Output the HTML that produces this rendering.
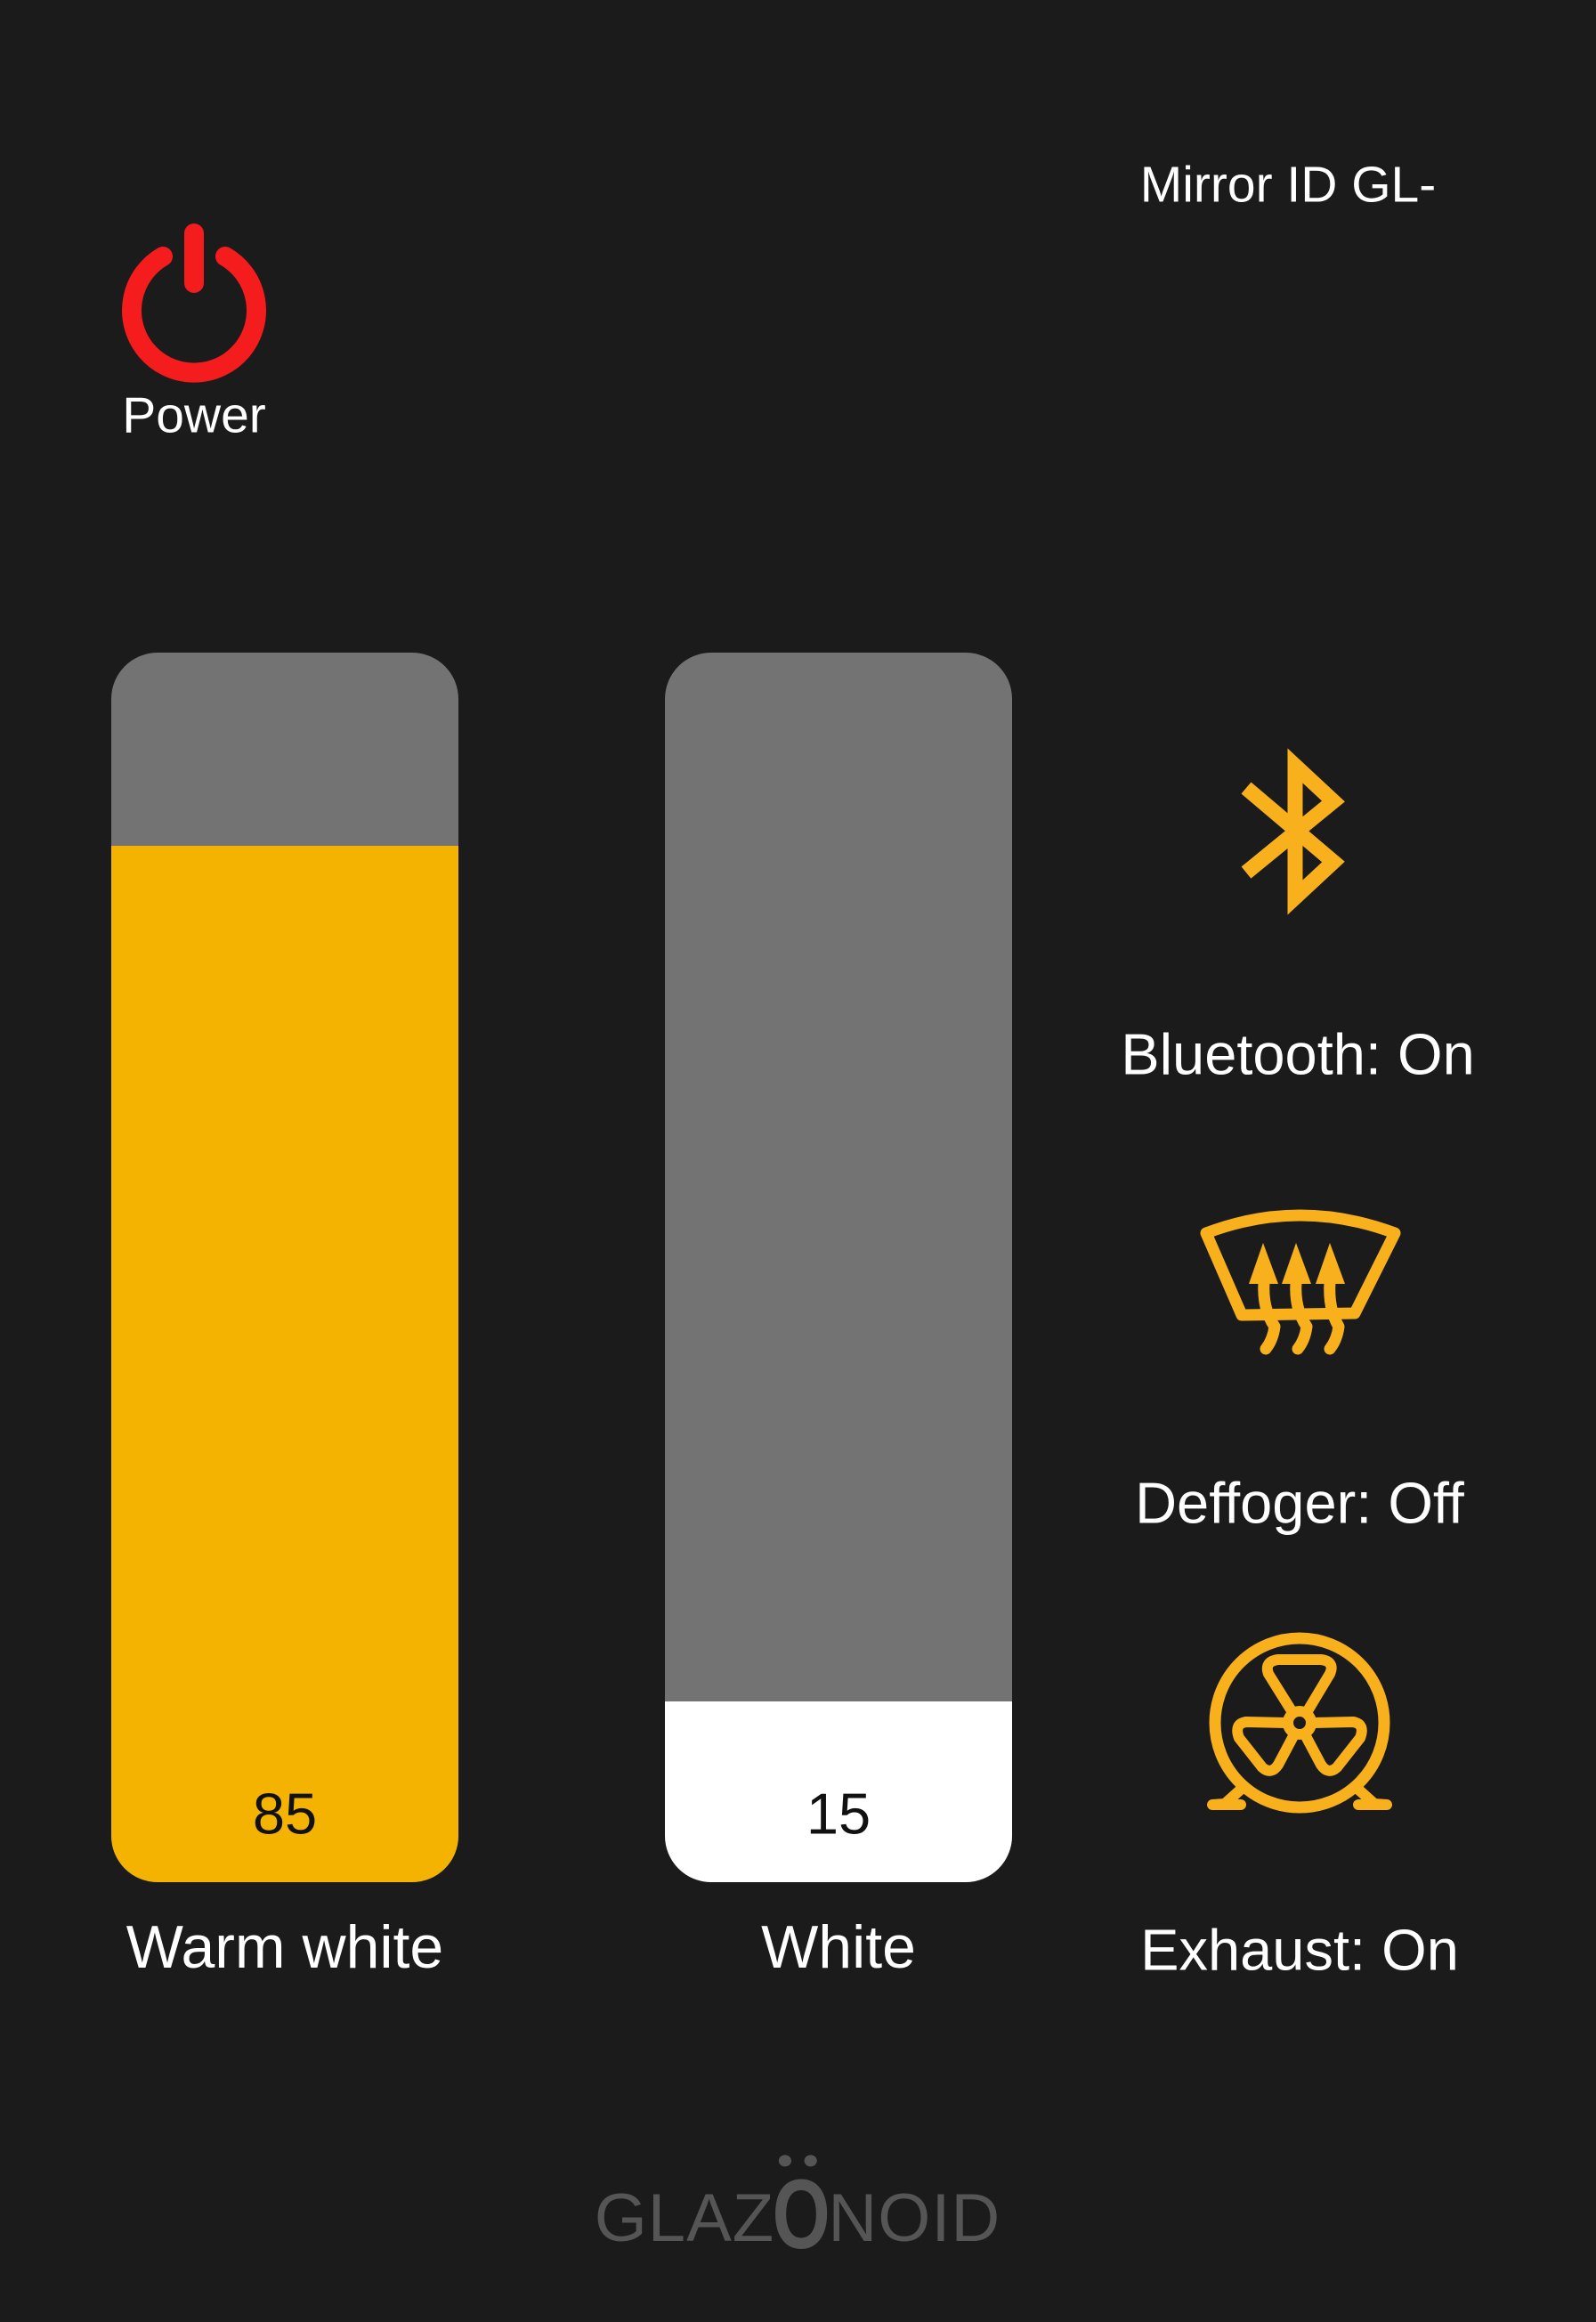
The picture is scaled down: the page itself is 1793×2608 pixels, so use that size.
<!DOCTYPE html>
<html><head><meta charset="utf-8"><style>
html,body{margin:0;padding:0;background:#1b1b1b;width:1793px;height:2608px;overflow:hidden;font-family:"Liberation Sans",Roboto,sans-serif;color:#fff}
.t{position:absolute;white-space:nowrap;transform:translate(-50%,-50%);line-height:1}
.bar{position:absolute;width:390px;top:733px;height:1381px;border-radius:52px;background:#737373;overflow:hidden}
.fill{position:absolute;left:0;right:0;bottom:0}
</style></head><body>
<svg width="1793" height="2608" style="position:absolute;left:0;top:0">
<!-- power -->
<g stroke="#f41c1c" stroke-width="22" fill="none" stroke-linecap="round">
<path d="M183,288 A70,70 0 1 0 253,288"/>
<line x1="218" y1="262" x2="218" y2="318"/>
</g>
<!-- bluetooth -->
<path d="M1400,885 L1498,968 L1455,1008 L1455,860 L1498,900 L1400,980" stroke="#f8b11c" stroke-width="17" fill="none" stroke-linejoin="miter"/>
<!-- defogger -->
<g stroke="#f8b11c" stroke-width="13" fill="none" stroke-linejoin="round" stroke-linecap="round">
<path d="M1355,1385 Q1460,1345 1567,1385 L1522,1475 L1395,1477 Z"/>
<path d="M1420,1440 Q1418,1470 1432,1490 Q1430,1505 1422,1515"/>
<path d="M1456,1440 Q1454,1470 1468,1490 Q1466,1505 1458,1515"/>
<path d="M1494,1440 Q1492,1470 1504,1490 Q1502,1505 1494,1515"/>
</g>
<g fill="#f8b11c">
<polygon points="1419,1396 1403,1442 1436,1442"/>
<polygon points="1456,1396 1440,1442 1473,1442"/>
<polygon points="1494,1396 1478,1442 1511,1442"/>
</g>
<!-- fan -->
<g stroke="#f8b11c" stroke-width="12" fill="none" stroke-linejoin="round" stroke-linecap="round">
<circle cx="1460" cy="1935" r="95" stroke-width="13"/>
<circle cx="1460" cy="1935" r="13"/>
<path d="M1450,1920 L1425,1880 Q1420,1866 1436,1864 L1484,1864 Q1500,1866 1494,1880 L1470,1920"/>
<path d="M1444,1935 L1400,1934 Q1386,1936 1392,1952 L1418,1985 Q1428,1994 1436,1982 L1453,1950"/>
<path d="M1476,1935 L1520,1934 Q1534,1936 1528,1952 L1502,1985 Q1492,1994 1484,1982 L1467,1950"/>
<path d="M1396,2008 L1376,2026 L1362,2027 L1394,2027"/>
<path d="M1524,2008 L1544,2026 L1558,2027 L1526,2027"/>
</g>
</svg>
<div class="t" style="left:1447px;top:208px;font-size:57px">Mirror ID GL-</div>
<div class="t" style="left:218px;top:467px;font-size:57px">Power</div>
<div class="bar" style="left:125px"><div class="fill" style="top:217px;background:#f3b300"></div></div>
<div class="bar" style="left:747px"><div class="fill" style="top:1178px;background:#fff"></div></div>
<div class="t" style="left:320px;top:2037px;font-size:65px;color:#111">85</div>
<div class="t" style="left:942px;top:2037px;font-size:65px;color:#111">15</div>
<div class="t" style="left:320px;top:2187px;font-size:68px">Warm white</div>
<div class="t" style="left:942px;top:2187px;font-size:68px">White</div>
<div class="t" style="left:1458px;top:1184px;font-size:65px">Bluetooth: On</div>
<div class="t" style="left:1460px;top:1688px;font-size:65px">Deffoger: Off</div>
<div class="t" style="left:1460px;top:2190px;font-size:65px">Exhaust: On</div>
<div class="t" style="left:896px;top:2492px;font-size:76px;color:#555;letter-spacing:1px">GLAZ<span style="position:relative;display:inline-block;transform:scale(1.1,1.45);transform-origin:50% 60%;font-weight:bold">O<span style="position:absolute;left:50%;top:-20px;transform:translateX(-50%) scaleY(0.7);font-size:30px;letter-spacing:8px;font-weight:normal">●●</span></span>NOID</div>
</body></html>
